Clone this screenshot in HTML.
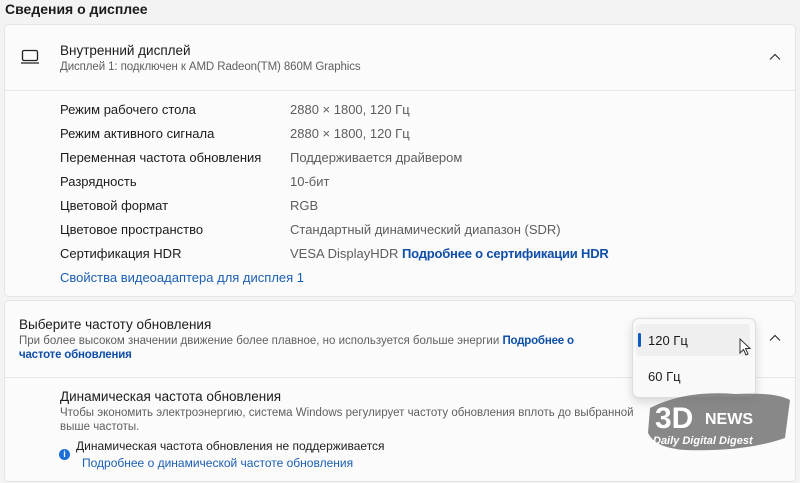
<!DOCTYPE html>
<html><head><meta charset="utf-8"><style>
body{margin:0;width:800px;height:483px;background:#f3f3f3;font-family:"Liberation Sans","Noto Sans CJK JP",sans-serif;position:relative;overflow:hidden;color:#1b1b1b}
.a{position:absolute;white-space:nowrap}
.card{position:absolute;left:4px;right:4px;background:#fbfbfb;border:1px solid #e5e5e5;border-radius:5px}
.l{font-size:13px;color:#1b1b1b}
.v{font-size:13px;color:#5d5d5d}
.s{font-size:11.5px;color:#606060}
.lk{color:#0f4fa8;font-weight:bold;letter-spacing:-0.2px}
.lk2{color:#1a5fb4}
</style></head><body>
<div class="a" style="left:5px;top:1px;font-size:14px;font-weight:bold">Сведения о дисплее</div>
<div class="card" style="top:24px;height:271px"></div>
<div class="a" style="left:5px;right:5px;top:90px;height:1px;background:#e8e8e8"></div>
<svg class="a" style="left:20px;top:49px" width="20" height="16" viewBox="0 0 20 16"><rect x="2.5" y="1.5" width="15" height="10" rx="1.5" fill="none" stroke="#222" stroke-width="1.3"/><line x1="1" y1="14" x2="19" y2="14" stroke="#222" stroke-width="1.3"/></svg>
<div class="a l" style="left:60px;top:43px;font-size:13.5px">Внутренний дисплей</div>
<div class="a s" style="left:60px;top:61px;letter-spacing:-0.1px">Дисплей 1: подключен к AMD Radeon(TM) 860M Graphics</div>
<svg class="a" style="left:769px;top:53px" width="12" height="8" viewBox="0 0 12 8"><path d="M1 6.5L6 1.5L11 6.5" fill="none" stroke="#333" stroke-width="1.2"/></svg>

<div class="a l" style="left:60px;top:102px">Режим рабочего стола</div><div class="a v" style="left:290px;top:102px">2880 × 1800, 120 Гц</div>
<div class="a l" style="left:60px;top:126px">Режим активного сигнала</div><div class="a v" style="left:290px;top:126px">2880 × 1800, 120 Гц</div>
<div class="a l" style="left:60px;top:150px">Переменная частота обновления</div><div class="a v" style="left:290px;top:150px">Поддерживается драйвером</div>
<div class="a l" style="left:60px;top:174px">Разрядность</div><div class="a v" style="left:290px;top:174px">10-бит</div>
<div class="a l" style="left:60px;top:198px">Цветовой формат</div><div class="a v" style="left:290px;top:198px">RGB</div>
<div class="a l" style="left:60px;top:222px">Цветовое пространство</div><div class="a v" style="left:290px;top:222px">Стандартный динамический диапазон (SDR)</div>
<div class="a l" style="left:60px;top:246px">Сертификация HDR</div><div class="a v" style="left:290px;top:246px">VESA DisplayHDR <span class="lk">Подробнее о сертификации HDR</span></div>
<div class="a lk2" style="left:60px;top:270px;font-size:13px">Свойства видеоадаптера для дисплея 1</div>

<div class="card" style="top:300px;height:180px"></div>
<div class="a" style="left:5px;right:5px;top:377px;height:1px;background:#e8e8e8"></div>
<div class="a l" style="left:19px;top:317px;font-size:13.5px">Выберите частоту обновления</div>
<div class="a s" style="left:19px;top:335px">При более высоком значении движение более плавное, но используется больше энергии <span class="lk">Подробнее о</span></div>
<div class="a s lk" style="left:19px;top:349px">частоте обновления</div>
<svg class="a" style="left:769px;top:334px" width="12" height="8" viewBox="0 0 12 8"><path d="M1 6.5L6 1.5L11 6.5" fill="none" stroke="#333" stroke-width="1.2"/></svg>

<div class="a l" style="left:60px;top:389px;font-size:13.5px">Динамическая частота обновления</div>
<div class="a s" style="left:60px;top:407px">Чтобы экономить электроэнергию, система Windows регулирует частоту обновления вплоть до выбранной</div>
<div class="a s" style="left:60px;top:421px">выше частоты.</div>
<div class="a" style="left:59px;top:449px;width:11px;height:11px;border-radius:50%;background:#1a6ed8;color:#fff;font-size:9px;text-align:center;line-height:11px;font-weight:bold">i</div>
<div class="a" style="left:76px;top:439px;font-size:12px;color:#222">Динамическая частота обновления не поддерживается</div>
<div class="a lk2" style="left:82px;top:456px;font-size:12px">Подробнее о динамической частоте обновления</div>

<div class="a" style="left:632px;top:318px;width:122px;height:78px;background:#f9f9f9;border:1px solid #ddd;border-radius:7px;box-shadow:0 4px 10px rgba(0,0,0,.15)"></div>
<div class="a" style="left:636px;top:324px;width:114px;height:32px;background:#efefef;border-radius:4px"></div>
<div class="a" style="left:638px;top:333px;width:3px;height:14px;background:#0f5cc0;border-radius:2px"></div>
<div class="a l" style="left:648px;top:333px">120 Гц</div>
<div class="a l" style="left:648px;top:369px">60 Гц</div>
<svg class="a" style="left:739px;top:338px" width="14" height="20" viewBox="0 0 14 20"><path d="M1 1V15L4.5 11.5L7 17L9 16L6.5 10.5H11Z" fill="#fff" stroke="#333" stroke-width="1"/></svg>

<svg class="a" style="left:645px;top:388px" width="150" height="70" viewBox="0 0 150 70"><path d="M5 20Q40 2 90 6Q130 4 145 12L140 50Q100 64 40 62Q10 60 3 45Z" fill="#6b6b6b" opacity=".8"/>
<text x="10" y="40" font-family="Liberation Sans" font-weight="bold" font-size="30" fill="#fff">3D</text>
<text x="60" y="36" font-family="Liberation Sans" font-weight="bold" font-size="16" fill="#fff">NEWS</text>
<text x="8" y="56" font-family="Liberation Sans" font-style="italic" font-weight="bold" font-size="11" fill="#fff">Daily Digital Digest</text></svg>
</body></html>
